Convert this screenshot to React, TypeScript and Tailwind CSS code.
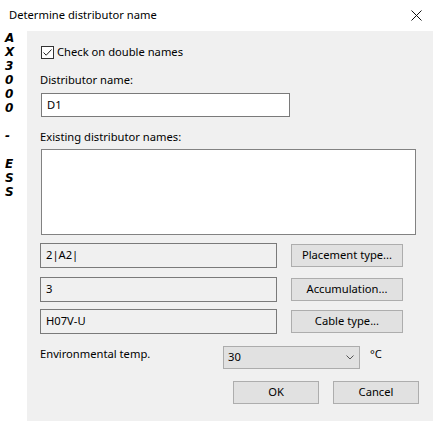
const ui = { fontFamily: '"Noto Sans", "Open Sans", sans-serif' };

function Field({ text, white }: { text: string; white?: boolean }) {
  return (
    <div
      className={`flex h-[25px] w-[237px] items-center border border-[#7a7a7a] pl-[5px] text-black ${
        white ? "bg-white" : "bg-[#f0f0f0]"
      }`}
    >
      {text}
    </div>
  );
}

function Btn({ label, w }: { label: string; w: string }) {
  return (
    <button
      className={`flex h-[23px] ${w} items-center justify-center border border-[#adadad] bg-[#e1e1e1] text-black`}
    >
      {label}
    </button>
  );
}

export default function App() {
  const side = "AX3000 - ESS".split("");
  return (
    <div className="flex h-[424px] w-[433px] flex-col bg-white text-[11.2px]" style={ui}>
      <div className="flex h-[31px] items-center justify-between pl-[9px] pr-[11px] text-black">
        <span>Determine distributor name</span>
        <svg width="11" height="11" viewBox="0 0 11 11" className="mt-[-1px]">
          <path d="M0.5 0.5 L10.5 10.5 M10.5 0.5 L0.5 10.5" stroke="#111" strokeWidth="1" />
        </svg>
      </div>

      <div className="flex h-[390px]">
        <div
          className="flex w-[27px] flex-col pl-[5px] text-[12px] font-bold italic leading-[14px] text-black"
          style={{ fontFamily: '"DejaVu Sans", sans-serif' }}
        >
          {side.map((c, i) => (
            <span key={i} className="h-[14px]">
              {c === " " ? "\u00a0" : c}
            </span>
          ))}
        </div>

        <div className="flex flex-1 flex-col bg-[#f0f0f0] pl-[13px] pr-[14px] text-black">
          <label className="ml-[1px] mt-[13px] flex h-[16px] items-center gap-[3px]">
            <span className="flex h-[13px] w-[13px] items-center justify-center border border-[#333] bg-white">
              <svg width="11" height="11" viewBox="0 0 11 11">
                <path d="M1.5 5.5 L4.2 8.2 L9.5 2.5" fill="none" stroke="#222" strokeWidth="1" />
              </svg>
            </span>
            <span>Check on double names</span>
          </label>

          <div className="mt-[12px] flex h-[16px] items-center">Distributor name:</div>
          <div className="ml-[1px] mt-[5px] flex h-[24px] w-[249px] items-center border border-[#7a7a7a] bg-white pl-[5px]">
            D1
          </div>

          <div className="mt-[12px] flex h-[16px] items-center">Existing distributor names:</div>
          <div className="ml-[1px] mt-[4px] h-[86px] w-[375px] border border-[#828282] bg-white" />

          <div className="mt-[8px] flex items-center gap-[14px]">
            <Field text="2|A2|" />
            <Btn label="Placement type..." w="w-[112px]" />
          </div>
          <div className="mt-[9px] flex items-center gap-[14px]">
            <Field text="3" />
            <Btn label="Accumulation..." w="w-[112px]" />
          </div>
          <div className="mt-[7px] flex items-center gap-[14px]">
            <Field text="H07V-U" />
            <Btn label="Cable type..." w="w-[112px]" />
          </div>

          <div className="mt-[12px] flex h-[23px] items-start">
            <span className="w-[183px] leading-[16px]">Environmental temp.</span>
            <div className="flex h-[23px] w-[137px] items-center justify-between border border-[#acacac] bg-[#e1e1e1] pl-[4px] pr-[5px]">
              <span>30</span>
              <svg width="8" height="5" viewBox="0 0 8 5">
                <path d="M0.5 0.5 L4 4 L7.5 0.5" fill="none" stroke="#555" strokeWidth="1" />
              </svg>
            </div>
            <span className="ml-[10px] leading-[16px]">°C</span>
          </div>

          <div className="mt-[12px] flex justify-end gap-[14px]">
            <Btn label="OK" w="w-[86px]" />
            <Btn label="Cancel" w="w-[86px]" />
          </div>
        </div>
      </div>
    </div>
  );
}
